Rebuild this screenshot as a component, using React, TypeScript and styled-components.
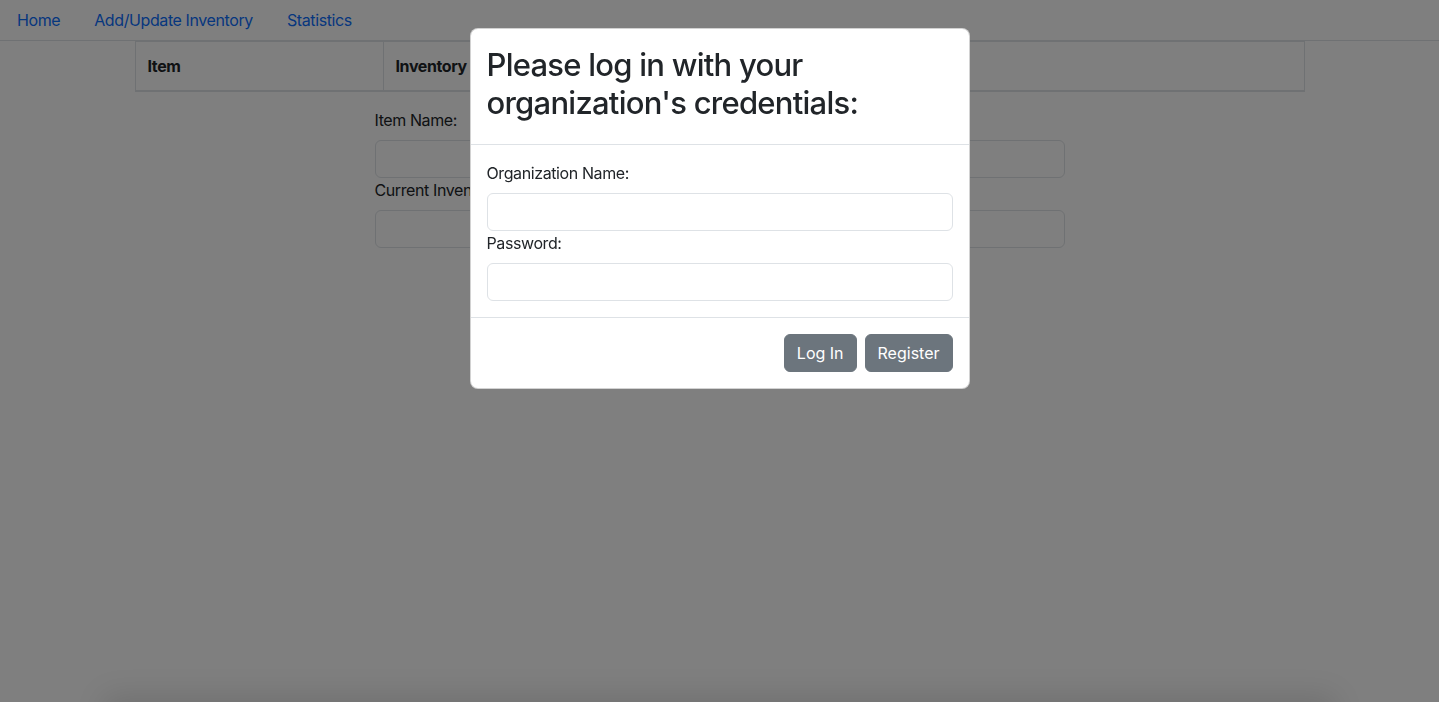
import React from "react";
import styled, { createGlobalStyle } from "styled-components";

const Global = createGlobalStyle`
  *, *::before, *::after { box-sizing: border-box; }
  html, body { margin: 0; padding: 0; height: 100%; }
  body {
    font-family: Inter, "Noto Sans", "Liberation Sans", sans-serif;
    font-size: 16px;
    line-height: 1.5;
    letter-spacing: -0.4px;
    color: #212529;
    background: #fff;
    overflow: hidden;
  }
`;

const Page = styled.div`
  min-height: 702px;
  display: flex;
  flex-direction: column;
`;

const NavTabs = styled.nav`
  display: flex;
  border-bottom: 1px solid #dee2e6;
`;

const NavLink = styled.a`
  display: block;
  padding: 8px 16px;
  border: 1px solid transparent;
  border-bottom: 0;
  color: #0d6efd;
  text-decoration: none;
  font-size: 16px;
  line-height: 23px;
`;

const Table = styled.table`
  width: 1170px;
  margin: 0 auto 16px;
  border-collapse: collapse;
  border: 1px solid #dee2e6;
`;

const Th = styled.th<{ $w?: number }>`
  width: ${(p) => (p.$w ? `${p.$w}px` : "auto")};
  padding: 12px 12px;
  text-align: left;
  font-weight: 700;
  line-height: 24px;
  border: 1px solid #dee2e6;
  border-bottom: 2px solid #dee2e6;
`;

const Form = styled.form`
  width: 690px;
  margin: 0 auto;
  display: flex;
  flex-direction: column;
`;

const Label = styled.label`
  display: block;
  margin-bottom: 8px;
  line-height: 24px;
`;

const Input = styled.input`
  display: block;
  width: 100%;
  height: 38px;
  padding: 6px 12px;
  font: inherit;
  border: 1px solid #dee2e6;
  border-radius: 6px;
  background: #fff;
  outline: none;
`;

const Backdrop = styled.div`
  position: fixed;
  inset: 0;
  background: rgba(0, 0, 0, 0.5);
`;

const BottomShade = styled.div`
  position: fixed;
  left: 110px;
  right: 110px;
  bottom: -30px;
  height: 30px;
  box-shadow: 0 0 30px 6px rgba(0, 0, 0, 0.12);
`;

const Dialog = styled.div`
  position: fixed;
  top: 28px;
  left: 50%;
  transform: translateX(-50%);
  width: 500px;
  background: #fff;
  border: 1px solid rgba(0, 0, 0, 0.175);
  border-radius: 8px;
  display: flex;
  flex-direction: column;
`;

const Header = styled.div`
  padding: 17px 16px 21px;
  border-bottom: 1px solid #dee2e6;
`;

const Title = styled.h2`
  margin: 0;
  font-size: 31px;
  font-weight: 500;
  line-height: 38.4px;
  letter-spacing: -0.75px;
`;

const Body = styled.div`
  padding: 16px;
  display: flex;
  flex-direction: column;
`;

const Footer = styled.div`
  padding: 12px;
  border-top: 1px solid #dee2e6;
  display: flex;
  justify-content: flex-end;
`;

const Button = styled.button`
  margin: 4px;
  height: 38px;
  padding: 6px 12px;
  font: inherit;
  color: #fff;
  background: #6c757d;
  border: 1px solid #6c757d;
  border-radius: 6px;
  cursor: pointer;
`;

export default function App() {
  return (
    <>
      <Global />
      <Page>
        <NavTabs>
          <NavLink href="#">Home</NavLink>
          <NavLink href="#">Add/Update Inventory</NavLink>
          <NavLink href="#">Statistics</NavLink>
        </NavTabs>
        <Table>
          <thead>
            <tr>
              <Th $w={248}>Item</Th>
              <Th>Inventory</Th>
            </tr>
          </thead>
        </Table>
        <Form>
          <Label>Item Name:</Label>
          <Input type="text" />
          <Label>Current Inventory:</Label>
          <Input type="text" />
        </Form>
      </Page>
      <Backdrop />
      <BottomShade />
      <Dialog>
        <Header>
          <Title>Please log in with your organization's credentials:</Title>
        </Header>
        <Body>
          <Label>Organization Name:</Label>
          <Input type="text" />
          <Label>Password:</Label>
          <Input type="password" />
        </Body>
        <Footer>
          <Button type="button">Log In</Button>
          <Button type="button">Register</Button>
        </Footer>
      </Dialog>
    </>
  );
}
